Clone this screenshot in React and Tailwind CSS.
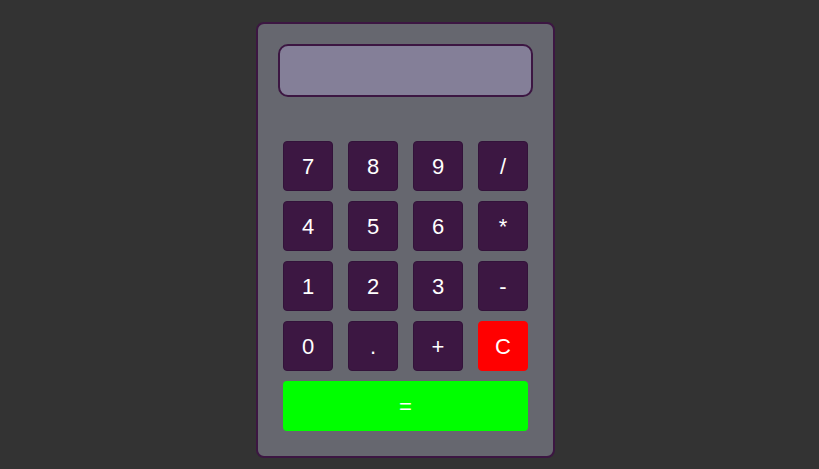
const keys = ['7', '8', '9', '/', '4', '5', '6', '*', '1', '2', '3', '-', '0', '.', '+', 'C'];

const Key = ({ label }) => {
  const isClear = label === 'C';
  return (
    <button
      className={`h-[50px] w-[50px] rounded-[4px] border text-[22px] text-white flex items-center justify-center ${
        isClear ? 'bg-[#ff0000] border-[#ff0000]' : 'bg-[#3c1742] border-[#33123a]'
      }`}
    >
      {label}
    </button>
  );
};

export default function App() {
  return (
    <div
      className="min-h-[469px] bg-[#333333] flex justify-center pt-[22px] pr-[8px]"
      style={{ fontFamily: '"Liberation Sans", Arial, sans-serif' }}
    >
      <div className="w-[299px] h-[436px] bg-[#66676f] border-2 border-[#3c1642] rounded-[8px] px-[20px] pt-[20px] pb-[25px] flex flex-col">
        <div className="h-[53px] bg-[#847f98] border-2 border-[#3c1642] rounded-[10px]"></div>
        <div className="mx-[5px] mt-[44px] grid grid-cols-[50px_50px_50px_50px] justify-between gap-y-[10px]">
          {keys.map((k) => (
            <Key key={k} label={k} />
          ))}
        </div>
        <button className="mx-[5px] mt-[10px] h-[50px] rounded-[4px] bg-[#00ff00] text-white text-[22px] flex items-center justify-center">
          =
        </button>
      </div>
    </div>
  );
}
